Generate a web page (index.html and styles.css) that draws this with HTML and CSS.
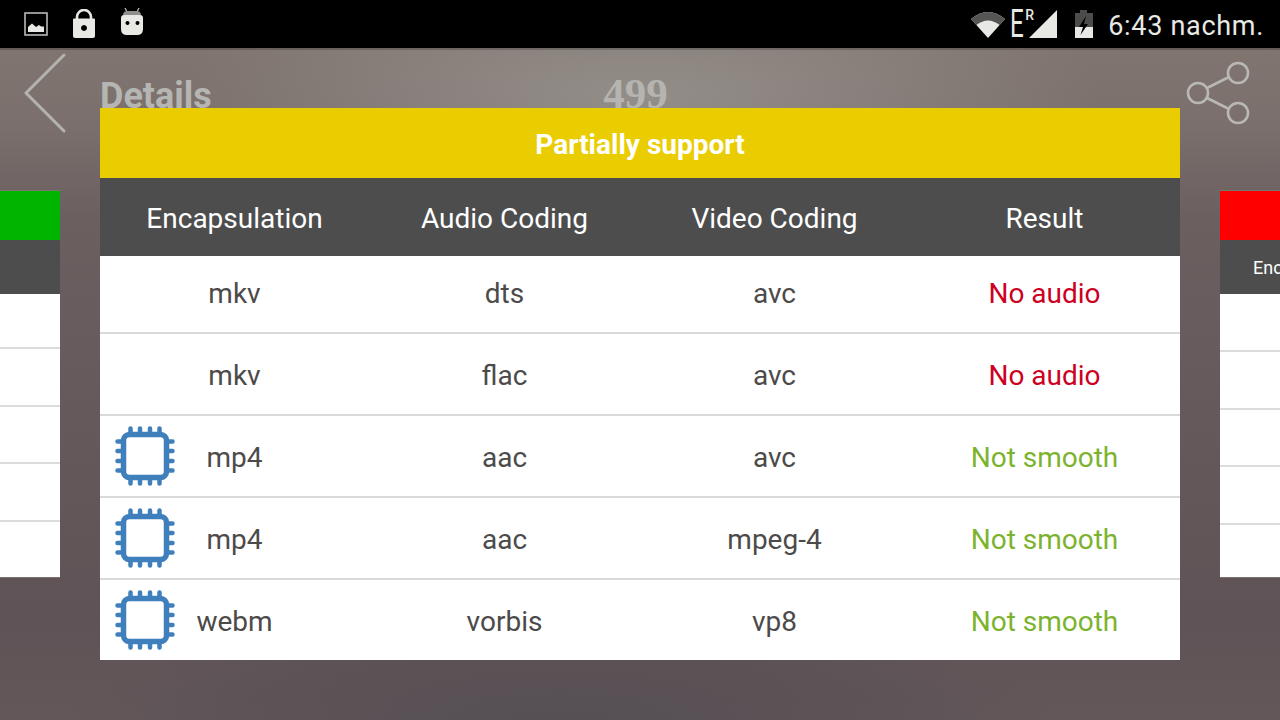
FILE: index.html
```html
<!DOCTYPE html>
<html lang="en">
<head>
    <meta charset="UTF-8">
    <meta name="viewport" content="width=device-width, initial-scale=1.0">
    <title>Details</title>
    <link rel="stylesheet" href="styles.css">
</head>
<body>

    <div class="statusbar">
        <div class="status-left">
            <svg class="ic-picture" width="24" height="24" viewBox="0 0 24 24">
                <rect x="1" y="1" width="22" height="22" fill="none" stroke="#b9bab6" stroke-width="1.6"/>
                <path d="M4 20 L4 15 L8 11.5 L12 15 L15 13 L17 14.5 L20 14.5 L20 20 Z" fill="#e8e9e5"/>
            </svg>
            <svg class="ic-lock" width="24" height="30" viewBox="0 0 24 30">
                <path d="M5 12 V8 a7 7 0 0 1 14 0 V12" fill="none" stroke="#e8e9e5" stroke-width="2.6"/>
                <path fill-rule="evenodd" d="M2 9.500 H22 a1 1 0 0 1 1 1 V27 a2 2 0 0 1 -2 2 H3 a2 2 0 0 1 -2 -2 V10.500 a1 1 0 0 1 1 -1 Z M12 16 a3 3 0 1 0 0.01 0 Z" fill="#e8e9e5"/>
            </svg>
            <svg class="ic-android" width="24" height="28" viewBox="0 0 24 28">
                <path d="M5 0 L7 4 M19 0 L17 4" stroke="#b9bab6" stroke-width="1.3"/>
                <path d="M3 7 Q3 3 8 3 H16 Q21 3 21 7 Z" fill="#8f908d"/>
                <path fill-rule="evenodd" d="M1 10 Q1 7 4 7 H20 Q23 7 23 10 V21 Q23 27 17 27 H7 Q1 27 1 21 Z M7.500 13 a2 2 0 1 0 0.01 0 Z M17.500 13 a2 2 0 1 0 0.01 0 Z" fill="#e8e9e5"/>
            </svg>
        </div>
        <div class="status-right">
            <svg class="ic-wifi" width="34" height="28" viewBox="0 0 34 28">
                <path d="M0 9 Q17 -5 34 9 L17 28 Z" fill="#e8e9e5"/>
                <path d="M0 9 Q17 -5 34 9 L28.500 15 Q17 6 5.500 15 Z" fill="#555654"/>
            </svg>
            <span class="net-e">E</span>
            <span class="net-r">R</span>
            <svg class="ic-signal" width="29" height="28" viewBox="0 0 29 28">
                <path d="M0 28 L28 0 V28 Z" fill="#e8e9e5"/>
            </svg>
            <svg class="ic-battery" width="20" height="30" viewBox="0 0 20 30">
                <path d="M6 1 H13 V4 H19 V29 H1 V4 H6 Z" fill="#4c4c4b"/>
                <path d="M1 18 H19 V29 H1 Z" fill="#e8e9e5"/>
                <path d="M12 7 L5 18 H9 L6.500 26 L14 15 H10 Z" fill="#000"/>
            </svg>
            <span class="clock">6:43 nachm.</span>
        </div>
    </div>

    <div class="screen">
        <div class="toolbar">
            <svg class="ic-back" width="44" height="80" viewBox="0 0 44 80">
                <path d="M40 2 L2 40 L40 78" fill="none" stroke="#b4b3b0" stroke-width="3" stroke-linecap="round" stroke-linejoin="round"/>
            </svg>
            <span class="page-title">Details</span>
            <span class="page-count">499</span>
            <svg class="ic-share" width="66" height="66" viewBox="0 0 66 66">
                <g fill="none" stroke="#b9b8b5" stroke-width="2.600">
                    <circle cx="12" cy="33" r="10"/>
                    <circle cx="52" cy="13" r="10"/>
                    <circle cx="52" cy="53" r="10"/>
                    <path d="M21 28 L43 17 M21 38 L43 49"/>
                </g>
            </svg>
        </div>

        <div class="carousel">
            <div class="side-card side-left">
                <div class="side-bar bar-green"></div>
                <div class="side-head"></div>
                <div class="side-row"></div>
                <div class="side-row"></div>
                <div class="side-row"></div>
                <div class="side-row"></div>
                <div class="side-row"></div>
            </div>
            <div class="side-card side-right">
                <div class="side-bar bar-red"></div>
                <div class="side-head">Encapsulation</div>
                <div class="side-row"></div>
                <div class="side-row"></div>
                <div class="side-row"></div>
                <div class="side-row"></div>
                <div class="side-row"></div>
            </div>
        </div>
    </div>

    <div class="dialog">
        <div class="dialog-title">Partially support</div>
        <div class="grid-row grid-head">
            <div>Encapsulation</div>
            <div>Audio Coding</div>
            <div>Video Coding</div>
            <div>Result</div>
        </div>
        <div class="grid-row first-row">
            <div>mkv</div>
            <div>dts</div>
            <div>avc</div>
            <div class="no-audio">No audio</div>
        </div>
        <div class="grid-row">
            <div>mkv</div>
            <div>flac</div>
            <div>avc</div>
            <div class="no-audio">No audio</div>
        </div>
        <div class="grid-row">
            <div class="has-chip">
                <svg class="ic-chip" viewBox="0 0 60 60"><use href="#chip"/></svg>
                mp4
            </div>
            <div>aac</div>
            <div>avc</div>
            <div class="not-smooth">Not smooth</div>
        </div>
        <div class="grid-row">
            <div class="has-chip">
                <svg class="ic-chip" viewBox="0 0 60 60"><use href="#chip"/></svg>
                mp4
            </div>
            <div>aac</div>
            <div>mpeg-4</div>
            <div class="not-smooth">Not smooth</div>
        </div>
        <div class="grid-row last-row">
            <div class="has-chip">
                <svg class="ic-chip" viewBox="0 0 60 60"><use href="#chip"/></svg>
                webm
            </div>
            <div>vorbis</div>
            <div>vp8</div>
            <div class="not-smooth">Not smooth</div>
        </div>
    </div>

    <svg class="svg-defs" width="0" height="0">
        <symbol id="chip" viewBox="0 0 60 60">
            <rect x="8.500" y="8.500" width="43" height="43" rx="6" fill="none" stroke="#3f7fbb" stroke-width="5.500"/>
            <path d="M15.500 7 V2.500 M25 7 V2.500 M35 7 V2.500 M44.500 7 V2.500 M15.500 53 V57.500 M25 53 V57.500 M35 53 V57.500 M44.500 53 V57.500 M7 15.500 H2.500 M7 25 H2.500 M7 35 H2.500 M7 44.500 H2.500 M53 15.500 H57.500 M53 25 H57.500 M53 35 H57.500 M53 44.500 H57.500" stroke="#3f7fbb" stroke-width="4.500" stroke-linecap="round"/>
        </symbol>
    </svg>

</body>
</html>
```

FILE: styles.css
```css
html, body {
    margin: 0;
    height: 100%;
}
body {
    width: 1280px;
    height: 720px;
    overflow: hidden;
    position: relative;
    font-family: Roboto, "Liberation Sans", sans-serif;
    background-color: #5f5458;
}
.svg-defs {
    display: block;
}

/* status bar */
.statusbar {
    height: 48px;
    background-color: #000;
    display: flex;
    justify-content: space-between;
    align-items: center;
    padding: 0 16px 0 24px;
}
.status-left, .status-right {
    display: flex;
    align-items: center;
}
.ic-lock {
    margin-left: 24px;
}
.ic-android {
    margin-left: 24px;
    margin-top: -4px;
}
.net-e {
    width: 22px;
    margin: 0 -7px 0 5px;
    color: #e8e9e5;
    font-size: 39px;
    line-height: 46px;
    transform: scaleX(0.62);
    transform-origin: left center;
}
.net-r {
    align-self: flex-start;
    margin: 6px -5px 0 0;
    color: #e8e9e5;
    font-size: 14px;
    font-weight: 500;
    line-height: 16px;
}
.ic-battery {
    margin-left: 16px;
}
.clock {
    margin: 3px 0 0 14px;
    color: #e8e9e5;
    font-size: 27px;
    letter-spacing: 0.7px;
}

/* page behind the dialog */
.screen {
    height: 672px;
    box-shadow: inset 0 2px 0 rgba(0, 0, 0, 0.2);
    background:
        radial-gradient(ellipse 460px 130px at 640px 50px, rgba(170, 170, 165, 0.5), rgba(170, 170, 165, 0) 100%),
        radial-gradient(ellipse 500px 110px at 560px 680px, rgba(70, 70, 78, 0.5), rgba(70, 70, 78, 0) 100%),
        linear-gradient(180deg, #80756f 0%, #7a6f6c 12%, #6b5f60 25%, #625659 70%, #5f5357 85%, #635759 100%);
}
.toolbar {
    height: 142px;
    position: relative;
    display: flex;
    align-items: flex-start;
}
.ic-back {
    margin: 5px 0 0 24px;
}
.page-title {
    margin: 27px 0 0 32px;
    font-size: 36px;
    font-weight: 700;
    line-height: 42px;
    color: #b5b5b3;
}
.page-count {
    position: absolute;
    left: 0;
    right: 9px;
    top: 21px;
    text-align: center;
    font-family: "Liberation Serif", serif;
    font-size: 43px;
    font-weight: 700;
    line-height: 50px;
    color: #b5b4b1;
}
.ic-share {
    position: absolute;
    left: 1186px;
    top: 12px;
}

.carousel {
    display: flex;
    justify-content: space-between;
}
.side-card {
    width: 60px;
    overflow: hidden;
    background-color: #fff;
    border-bottom: 1px solid #77736f;
}
.side-bar {
    height: 49px;
    border-top: 1px solid #77776c;
}
.bar-green {
    background-color: #00b400;
}
.bar-red {
    background-color: #ff0000;
}
.side-head {
    height: 54px;
    background-color: #4d4d4d;
    color: #fff;
    font-size: 18px;
    line-height: 56px;
    padding-left: 33px;
    white-space: nowrap;
}
.side-row {
    height: 55.500px;
    border-bottom: 2px solid #dcdcdc;
}
.side-row:last-child {
    border-bottom: none;
}
.side-left .side-head + .side-row {
    height: 53px;
}
.side-left .side-row:last-child {
    height: 55.500px;
}
.side-right .side-head + .side-row {
    height: 56px;
}
.side-right .side-row:last-child {
    height: 51.500px;
}

/* dialog */
.dialog {
    position: absolute;
    left: 100px;
    top: 108px;
    width: 1080px;
    height: 552px;
    background-color: #fff;
}
.dialog-title {
    height: 70px;
    background-color: #eacd00;
    color: #fff;
    font-size: 28px;
    font-weight: 700;
    line-height: 73px;
    text-align: center;
}
.grid-row {
    display: grid;
    grid-template-columns: 270px 270px 270px 270px;
    align-items: center;
    height: 78px;
    padding-top: 2px;
    border-bottom: 2px solid #d9d9d9;
    text-align: center;
    font-size: 28px;
    color: #4d4a4a;
}
.grid-row > div {
    padding-right: 1px;
}
.grid-head {
    height: 72px;
    padding-top: 4px;
    padding-bottom: 2px;
    background-color: #4d4d4d;
    border-bottom: none;
    color: #fff;
}
.first-row {
    height: 74px;
    padding-top: 0;
    padding-bottom: 2px;
}
.last-row {
    border-bottom: none;
}
.has-chip {
    position: relative;
}
.ic-chip {
    position: absolute;
    left: 15px;
    top: 50%;
    margin-top: -31px;
    width: 60px;
    height: 60px;
}
.no-audio {
    color: #cc0022;
}
.not-smooth {
    color: #7cb32e;
}
```
